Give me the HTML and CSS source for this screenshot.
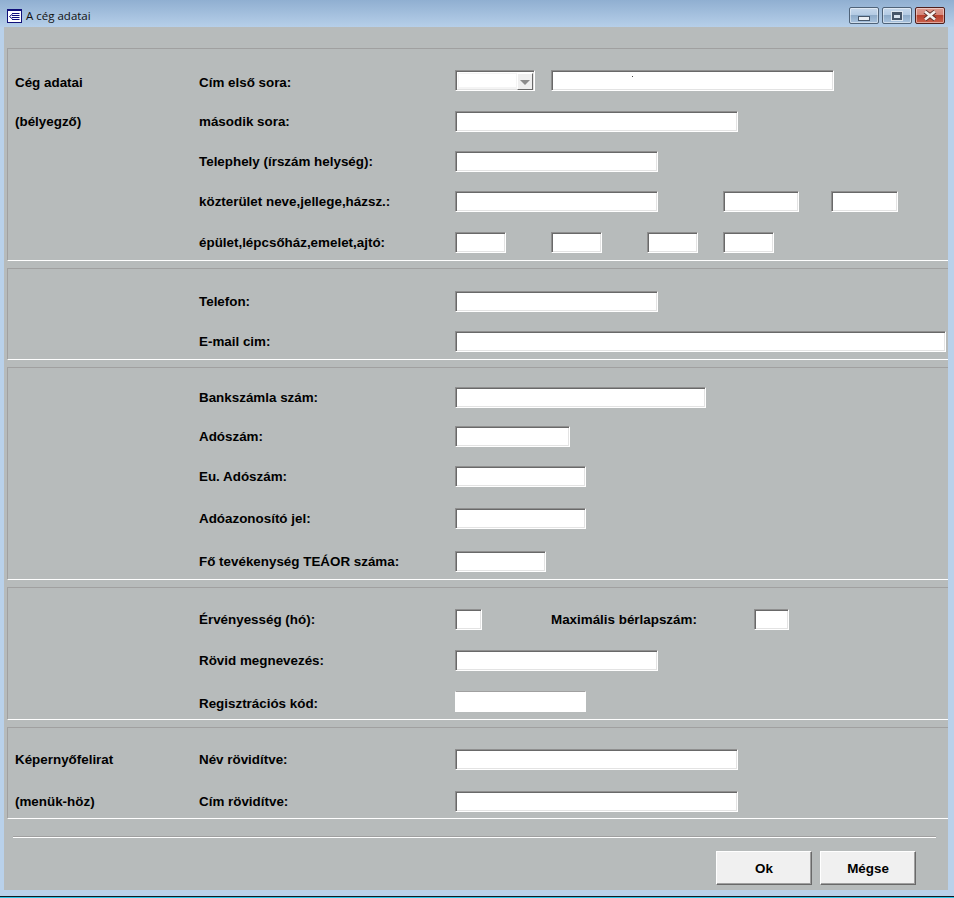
FILE: index.html
```html
<!DOCTYPE html>
<html lang="hu">
<head>
  <meta charset="UTF-8">
  <title>A cég adatai</title>
  <link rel="stylesheet" href="styles.css">
</head>
<body>
  <div class="window">
    <div class="titlebar">
      <svg class="app-icon" width="15" height="14" viewBox="0 0 15 14">
        <rect x="0.5" y="0.5" width="14" height="13" fill="#fff" stroke="#10107a"/>
        <rect x="0" y="0" width="15" height="2" fill="#10107a"/>
        <path d="M2.5 7.5 L5.5 5 M2.5 7.5 L5.5 10" stroke="#10107a" fill="none"/>
        <path d="M5 4.5 H12.5 M5 6.5 H12.5 M5 8.5 H12.5 M5 10.5 H12.5" stroke="#10107a"/>
      </svg>
      <span class="title">A cég adatai</span>
      <div class="win-buttons">
        <div class="win-btn"><span class="glyph-min"></span></div>
        <div class="win-btn"><span class="glyph-max"></span></div>
        <div class="win-btn win-close">
          <svg width="16" height="11" viewBox="0 0 16 11">
            <path d="M3 1.5 L13 9.5 M13 1.5 L3 9.5" stroke="#5a2a22" stroke-width="4.4"/>
            <path d="M3 1.5 L13 9.5 M13 1.5 L3 9.5" stroke="#f4f0ee" stroke-width="2.8"/>
          </svg>
        </div>
      </div>
    </div>

    <form class="panel">
      <section class="group pad-21">
        <div class="row h-41 row-low">
          <div class="side">Cég adatai</div>
          <label>Cím első sora:</label>
          <div class="fields">
            <div class="combo">
              <div class="combo-text"></div>
              <div class="combo-btn"><span class="arrow"></span></div>
            </div>
            <div class="speck-wrap ml-16">
              <input class="w-283" type="text">
              <span class="speck"></span>
            </div>
          </div>
        </div>
        <div class="row h-40">
          <div class="side">(bélyegző)</div>
          <label>második sora:</label>
          <div class="fields"><input class="w-283" type="text"></div>
        </div>
        <div class="row h-40">
          <div class="side"></div>
          <label>Telephely (írszám helység):</label>
          <div class="fields"><input class="w-203" type="text"></div>
        </div>
        <div class="row h-41">
          <div class="side"></div>
          <label>közterület neve,jellege,házsz.:</label>
          <div class="fields">
            <input class="w-203" type="text">
            <input class="w-76 ml-65" type="text">
            <input class="w-67 ml-32" type="text">
          </div>
        </div>
        <div class="row">
          <div class="side"></div>
          <label>épület,lépcsőház,emelet,ajtó:</label>
          <div class="fields">
            <input class="w-51" type="text">
            <input class="w-51 ml-45" type="text">
            <input class="w-51 ml-45" type="text">
            <input class="w-51 ml-25" type="text">
          </div>
        </div>
      </section>

      <section class="group pad-22">
        <div class="row h-40">
          <div class="side"></div>
          <label>Telefon:</label>
          <div class="fields"><input class="w-203" type="text"></div>
        </div>
        <div class="row">
          <div class="side"></div>
          <label>E-mail cim:</label>
          <div class="fields"><input class="w-491" type="text"></div>
        </div>
      </section>

      <section class="group pad-19">
        <div class="row h-39">
          <div class="side"></div>
          <label>Bankszámla szám:</label>
          <div class="fields"><input class="w-251" type="text"></div>
        </div>
        <div class="row h-40">
          <div class="side"></div>
          <label>Adószám:</label>
          <div class="fields"><input class="w-115" type="text"></div>
        </div>
        <div class="row h-42">
          <div class="side"></div>
          <label>Eu. Adószám:</label>
          <div class="fields"><input class="w-131" type="text"></div>
        </div>
        <div class="row h-43">
          <div class="side"></div>
          <label>Adóazonosító jel:</label>
          <div class="fields"><input class="w-131" type="text"></div>
        </div>
        <div class="row">
          <div class="side"></div>
          <label>Fő tevékenység TEÁOR száma:</label>
          <div class="fields"><input class="w-91" type="text"></div>
        </div>
      </section>

      <section class="group pad-21">
        <div class="row h-41">
          <div class="side"></div>
          <label>Érvényesség (hó):</label>
          <div class="fields">
            <input class="w-27" type="text">
            <label class="inline-label">Maximális bérlapszám:</label>
            <input class="w-35" type="text">
          </div>
        </div>
        <div class="row h-41">
          <div class="side"></div>
          <label>Rövid megnevezés:</label>
          <div class="fields"><input class="w-203" type="text"></div>
        </div>
        <div class="row row-low">
          <div class="side"></div>
          <label>Regisztrációs kód:</label>
          <div class="fields"><input class="w-131 flat" type="text"></div>
        </div>
      </section>

      <section class="group pad-21 last">
        <div class="row h-42">
          <div class="side">Képernyőfelirat</div>
          <label>Név rövidítve:</label>
          <div class="fields"><input class="w-283" type="text"></div>
        </div>
        <div class="row">
          <div class="side">(menük-höz)</div>
          <label>Cím rövidítve:</label>
          <div class="fields"><input class="w-283" type="text"></div>
        </div>
      </section>

      <div class="separator"></div>

      <div class="actions">
        <button type="button">Ok</button>
        <button type="button">Mégse</button>
      </div>
    </form>

    <div class="taskbar-edge"></div>
  </div>
</body>
</html>
```

FILE: styles.css
```css
html, body {
  margin: 0;
  padding: 0;
  height: 100%;
  overflow: hidden;
}
body {
  background-color: #b9d1ea;
  font-family: "Liberation Sans", Arial, sans-serif;
  color: #000;
}
.window {
  height: 898px;
  display: flex;
  flex-direction: column;
}

/* title bar */
.titlebar {
  height: 27px;
  display: flex;
  align-items: flex-start;
  padding: 0 9px 0 7px;
  background: linear-gradient(#90afd1, #b6cfe9);
  box-sizing: border-box;
}
.app-icon {
  margin-top: 9px;
}
.title {
  margin-left: 4px;
  margin-top: 8px;
  font-family: "Open Sans", sans-serif;
  font-size: 11.5px;
  line-height: 16px;
  color: #111;
}
.win-buttons {
  margin-left: auto;
  margin-top: 7px;
  display: flex;
  gap: 3px;
}
.win-btn {
  width: 30px;
  height: 17px;
  box-sizing: border-box;
  border: 1px solid #4f6379;
  border-radius: 2px;
  background: linear-gradient(#c6d8ec 0%, #b4cbe4 45%, #8eabc9 50%, #a9c3de 100%);
  box-shadow: inset 0 0 0 1px rgba(255,255,255,0.45);
  display: flex;
  align-items: center;
  justify-content: center;
}
.win-close {
  border-color: #4e1f1c;
  background: linear-gradient(#dc9a8f 0%, #d5877a 45%, #b8402c 50%, #c9604d 100%);
}
.glyph-min {
  width: 10px;
  height: 3px;
  margin-top: 5px;
  background: #e9eef4;
  border: 1px solid #46566a;
}
.glyph-max {
  width: 6px;
  height: 3px;
  border: 2px solid #46566a;
  border-top-width: 3px;
  background: #d9e4f0;
  outline: 1px solid #dde6f0;
}

/* main grey panel */
.panel {
  margin: 0 6px 0 4px;
  height: 863px;
  box-sizing: border-box;
  padding: 21px 0 0 3px;
  background-color: #b7bbbb;
  display: block;
}
.group {
  border-top: 1px solid #a0a0a0;
  border-left: 1px solid #a0a0a0;
  border-bottom: 1px solid #fff;
  padding-bottom: 7px;
  margin-bottom: 7px;
}
.group.last {
  padding-bottom: 6px;
  margin-bottom: 0;
}
.pad-19 { padding-top: 19px; }
.pad-21 { padding-top: 21px; }
.pad-22 { padding-top: 22px; }

.row {
  display: flex;
  align-items: flex-start;
  font-size: 13.4px;
  font-weight: bold;
  line-height: 21px;
}
.h-39 { height: 39px; }
.h-40 { height: 40px; }
.h-41 { height: 41px; }
.h-42 { height: 42px; }
.h-43 { height: 43px; }
.side {
  width: 184px;
  margin-left: 7px;
  flex: none;
}
.row > label {
  width: 256px;
  flex: none;
}
.row-low > .side,
.row-low > label {
  padding-top: 2px;
  margin-bottom: -2px;
}
.fields {
  display: flex;
  align-items: flex-start;
}
.inline-label {
  width: 203px;
  margin-left: 69px;
}

/* sunken fields */
input {
  display: block;
  height: 21px;
  margin: 0;
  padding: 0 2px;
  box-sizing: border-box;
  background: #fff;
  border: 1px solid;
  border-color: #8f8f8f #fff #fff #8f8f8f;
  border-radius: 0;
  box-shadow: inset 1px 1px 0 #696969, inset -1px -1px 0 #e3e3e3;
  outline: none;
}
input.flat {
  border-top-color: #a0a0a0;
  border-left-color: #fff;
  box-shadow: none;
}
.w-27 { width: 27px; }
.w-35 { width: 35px; }
.w-51 { width: 51px; }
.w-67 { width: 67px; }
.w-76 { width: 76px; }
.w-91 { width: 91px; }
.w-115 { width: 115px; }
.w-131 { width: 131px; }
.w-203 { width: 203px; }
.w-251 { width: 251px; }
.w-283 { width: 283px; }
.w-491 { width: 491px; }
.ml-16 { margin-left: 16px; }
.ml-25 { margin-left: 25px; }
.ml-32 { margin-left: 32px; }
.ml-45 { margin-left: 45px; }
.ml-65 { margin-left: 65px; }

.speck-wrap {
  position: relative;
}
.speck {
  position: absolute;
  left: 81px;
  top: 6px;
  width: 1px;
  height: 1px;
  background: #444;
}

/* combo box */
.combo {
  width: 80px;
  height: 21px;
  box-sizing: border-box;
  border: 1px solid;
  border-color: #8f8f8f #fff #fff #8f8f8f;
  box-shadow: inset 1px 1px 0 #696969, inset -1px -1px 0 #e3e3e3;
  background: #fff;
  padding: 2px 1px 1px 2px;
  display: flex;
}
.combo-text {
  flex: 1;
  border: 1px solid #f4f4f4;
  border-bottom-width: 2px;
  background: #fff;
}
.combo-btn {
  width: 16px;
  box-sizing: border-box;
  background: #efefef;
  border-right: 1px solid #696969;
  border-bottom: 1px solid #696969;
  border-top: 1px solid #fff;
  border-left: 1px solid #fff;
  margin-bottom: -1px;
  display: flex;
  align-items: center;
  justify-content: center;
}
.arrow {
  width: 0;
  height: 0;
  border-left: 5px solid transparent;
  border-right: 5px solid transparent;
  border-top: 5px solid #8c8c8c;
  margin-top: 2px;
}

/* bottom */
.separator {
  margin: 17px 12px 0 6px;
  border-top: 1px solid #a0a0a0;
  border-bottom: 1px solid #fff;
}
.actions {
  display: flex;
  justify-content: flex-end;
  gap: 8px;
  margin-top: 13px;
  padding-right: 32px;
}
button {
  width: 96px;
  height: 34px;
  padding: 0;
  box-sizing: border-box;
  font-family: "Liberation Sans", Arial, sans-serif;
  font-size: 13.4px;
  font-weight: bold;
  color: #000;
  background: #f0f0f0;
  border: 1px solid;
  border-color: #fff #696969 #696969 #fff;
  box-shadow: inset -1px -1px 0 #a0a0a0;
  border-radius: 0;
}

.taskbar-edge {
  margin-top: 6px;
  height: 2px;
  background: linear-gradient(#0d1a22 50%, #2bc4e8 50%);
}
```
